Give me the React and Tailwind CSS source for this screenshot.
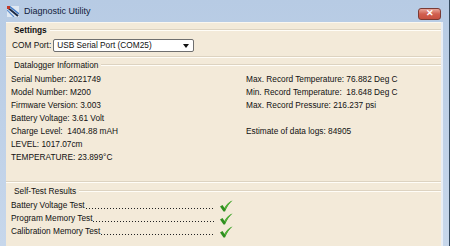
import React from "react";

const leftRows = [
    "Serial Number: 2021749",
    "Model Number: M200",
    "Firmware Version: 3.003",
    "Battery Voltage: 3.61 Volt",
    "Charge Level:  1404.88 mAH",
    "LEVEL: 1017.07cm",
    "TEMPERATURE: 23.899°C",
];

const rightRows = [
    "Max. Record Temperature: 76.882 Deg C",
    "Min. Record Temperature:  18.648 Deg C",
    "Max. Record Pressure: 216.237 psi",
    "",
    "Estimate of data logs: 84905",
];

const tests = ["Battery Voltage Test", "Program Memory Test", "Calibration Memory Test"];

const GroupHeader = ({ title, bold }) => (
    <div className="flex items-center h-[12px]">
        <span className={"pl-[8px] pr-[3px] leading-[12px] " + (bold ? "font-bold" : "")}>{title}</span>
        <div className="flex-1 flex flex-col">
            <div className="h-px bg-[#ddd3c1]" />
            <div className="h-px bg-[#fffdf7]" />
        </div>
    </div>
);

const Divider = () => (
    <div className="flex flex-col">
        <div className="h-px bg-[#ddd3c1]" />
        <div className="h-px bg-[#fffdf7]" />
    </div>
);

const Check = () => (
    <svg width="14" height="12" viewBox="0 0 14 12">
        <path d="M1 6.5 L3.5 5 L5.5 8 C7.5 4.5 10 2 13.5 0.5 C10.5 3 8 6.5 6 11.5 L4.5 11.5 Z" fill="#2f8f1f" />
        <path d="M5.5 8 C7.5 4.5 10 2 13.5 0.5 C10.5 3 8.5 5.5 6.6 9.5 Z" fill="#53b33a" />
    </svg>
);

const App = () => {
    return (
        <div
            className="w-[450px] h-[246px] overflow-hidden flex flex-col bg-gradient-to-b from-[#b7cbe4] to-[#c7d7eb] text-[#111] border-r border-[#34495e]"
            style={{ fontFamily: '"Liberation Sans", Arial, sans-serif' }}
        >
            {/* title bar */}
            <div className="h-[22px] flex items-center pl-[7px] pr-[8px]">
                <svg width="12" height="11" viewBox="0 0 12 11" className="mr-[5px]">
                    <rect x="0" y="0" width="12" height="11" fill="#dfe8f2" />
                    <path d="M0 1 L11 10" stroke="#1d2a44" strokeWidth="2" />
                    <path d="M2 0 L12 8" stroke="#3f78c4" strokeWidth="1.5" />
                    <path d="M0 4 L7 11" stroke="#5b8fd0" strokeWidth="1.2" />
                    <rect x="0" y="0" width="3" height="3" fill="#c23a2a" />
                </svg>
                <span className="text-[9px] leading-none text-[#10203a]">Diagnostic Utility</span>
                <div className="flex-1" />
                <div className="mt-[5px] w-[23px] h-[12px] rounded-[3px] border border-[#7a3b35] bg-gradient-to-b from-[#e8a59a] via-[#d05f4f] to-[#c8503f] flex items-center justify-center">
                    <span className="text-white text-[9px] font-bold leading-none">✕</span>
                </div>
            </div>

            {/* client area */}
            <div className="flex-1 ml-[6px] mr-[6px] bg-[#f3ead9] border-r-2 border-[#e9eef5] text-[8.3px] flex flex-col">
                <div className="h-px bg-[#fbf7ef]" />
                <div className="h-[13px] flex items-center">
                    <div className="flex-1">
                        <GroupHeader title="Settings" bold />
                    </div>
                </div>

                <div className="h-[19px] flex items-center pl-[6px]">
                    <span className="mr-[2px]">COM Port:</span>
                    <div className="w-[141px] h-[13px] bg-white border border-[#6f6f6f] rounded-[2px] flex items-center pl-[3px] pr-[4px]">
                        <span className="flex-1 leading-none">USB Serial Port (COM25)</span>
                        <svg width="6" height="4" viewBox="0 0 6 4">
                            <path d="M0 0 L6 0 L3 4 Z" fill="#111" />
                        </svg>
                    </div>
                </div>

                <div className="h-[4px] flex flex-col justify-center">
                    <Divider />
                </div>

                <GroupHeader title="Datalogger Information" />

                <div className="mt-[2px] pl-[5px] flex">
                    <div className="w-[235px] flex flex-col leading-[13px]">
                        {leftRows.map((r) => (
                            <div key={r} className="h-[13px] whitespace-pre">{r}</div>
                        ))}
                    </div>
                    <div className="flex flex-col leading-[13px]">
                        {rightRows.map((r, i) => (
                            <div key={i} className="h-[13px] whitespace-pre">{r}</div>
                        ))}
                    </div>
                </div>

                <div className="h-[17px]" />
                <Divider />
                <div className="h-[2px]" />
                <GroupHeader title="Self-Test Results" />

                <div className="mt-[2px] pl-[5px] flex flex-col">
                    {tests.map((t) => (
                        <div key={t} className="h-[13px] flex items-center">
                            <div className="w-[203px] flex items-end leading-[13px] h-[13px]">
                                <span className="whitespace-nowrap">{t}</span>
                                <div className="flex-1 h-px mb-[3px] ml-[1px] bg-[repeating-linear-gradient(90deg,#222_0px,#222_1px,transparent_1px,transparent_3px)]" />
                            </div>
                            <div className="ml-[5px]">
                                <Check />
                            </div>
                        </div>
                    ))}
                </div>
            </div>
        </div>
    );
};

export default App;
